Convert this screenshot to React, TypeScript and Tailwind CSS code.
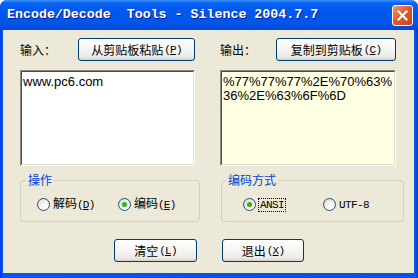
import React from "react";

const cjk = "font-['Noto_Sans_CJK_SC','Liberation_Sans',sans-serif]";

function XpButton({ label, keyChar, className }: { label: string; keyChar: string; className: string }) {
    return (
        <button
            className={`h-[23px] rounded-[3px] border border-[#003c74] bg-[linear-gradient(180deg,#ffffff_0%,#f7f7f4_40%,#ecebe6_85%,#d6d0c5_100%)] text-[12px] leading-[12px] text-black flex items-center justify-center ${cjk} ${className}`}
        >
            <span>{label}</span>
            <span className="font-['Liberation_Mono',monospace] text-[11px] tracking-[-0.8px] ml-[1px]">
                (<span className="underline">{keyChar}</span>)
            </span>
        </button>
    );
}

function Radio({ checked, children, width }: { checked?: boolean; children: React.ReactNode; width: string }) {
    return (
        <div className={`flex items-center ${width}`}>
            <span className="w-[13px] h-[13px] rounded-full border border-[#1c5180] bg-[radial-gradient(circle_at_65%_70%,#ffffff_0%,#f4f3ee_40%,#d9d6c8_100%)] flex items-center justify-center shrink-0">
                {checked && <span className="w-[5px] h-[5px] rounded-full bg-[#3fae2a] shadow-[0_0_1px_#7ad36a]" />}
            </span>
            <span className="ml-[3px] text-[12px] leading-[13px] text-black">{children}</span>
        </div>
    );
}

function Sunken({ className, children }: { className: string; children: React.ReactNode }) {
    return (
        <div className={`border border-t-[#8a8a86] border-l-[#8a8a86] border-b-[#ffffff] border-r-[#ffffff] ${className}`}>
            <div className="h-full border border-t-[#4a4a46] border-l-[#4a4a46] border-b-[#e2dfd2] border-r-[#e2dfd2] px-[1px] pt-[3px] font-['Liberation_Sans',sans-serif] text-[13px] leading-[14px] text-black">
                {children}
            </div>
        </div>
    );
}

export default function App() {
    return (
        <div className={`w-[418px] h-[278px] flex flex-col rounded-t-[7px] overflow-hidden bg-[linear-gradient(90deg,#0831d9_0px,#0058ee_2px,#0055e5_calc(100%-2px),#0033b8_100%)] ${cjk}`}>
            {/* title bar */}
            <div className="h-[30px] shrink-0 flex items-center justify-between pl-[7px] pr-[5px] bg-[linear-gradient(180deg,#3d95ff_0%,#0a64f2_10%,#0058ee_35%,#0056ea_75%,#0049d6_100%)]">
                <span className="whitespace-pre font-['Liberation_Mono',monospace] font-bold text-[13.3px] text-white [text-shadow:1px_1px_0_#0a1e8a]">
                    Encode/Decode  Tools - Silence 2004.7.7
                </span>
                <div className="w-[21px] h-[21px] rounded-[3px] border border-white bg-[linear-gradient(135deg,#f29a76_0%,#e45a2e_45%,#c8401c_100%)] flex items-center justify-center">
                    <svg width="13" height="13" viewBox="0 0 13 13">
                        <path d="M2.5 2.5 L10.5 10.5 M10.5 2.5 L2.5 10.5" stroke="#ffffff" strokeWidth="2" strokeLinecap="square" />
                    </svg>
                </div>
            </div>

            {/* body */}
            <div className="flex-1 ml-[3px] mr-[4px] mb-[5px] bg-[#ece9d8] flex flex-col pt-[8px]">
                <div className="flex pl-[17px] gap-[23px]">
                    {/* input column */}
                    <div className="w-[177px] flex flex-col">
                        <div className="h-[23px] flex items-center">
                            <span className="w-[58px] text-[12px] text-black">输入：</span>
                            <XpButton label="从剪贴板粘贴" keyChar="P" className="w-[117px]" />
                        </div>
                        <Sunken className="mt-[9px] w-[175px] h-[96px] bg-white">www.pc6.com</Sunken>
                        <fieldset className="mt-[8px] w-[177px] border border-[#d0d0bf] rounded-[4px] pl-[16px] pt-[10px] pb-[9px] flex">
                            <legend className="-ml-[11px] px-[2px] text-[12px] leading-[12px] text-[#0046d5]">操作</legend>
                            <div className="flex">
                                <Radio width="w-[81px]">
                                    解码<span className="font-['Liberation_Mono',monospace] text-[11px] tracking-[-0.8px]">(<span className="underline">D</span>)</span>
                                </Radio>
                                <Radio checked width="w-[81px]">
                                    编码<span className="font-['Liberation_Mono',monospace] text-[11px] tracking-[-0.8px]">(<span className="underline">E</span>)</span>
                                </Radio>
                            </div>
                        </fieldset>
                    </div>

                    {/* output column */}
                    <div className="w-[176px] flex flex-col">
                        <div className="h-[23px] flex items-center">
                            <span className="w-[56px] text-[12px] text-black">输出：</span>
                            <XpButton label="复制到剪贴板" keyChar="C" className="w-[120px]" />
                        </div>
                        <Sunken className="mt-[9px] w-[176px] h-[96px] bg-[#ffffe1]">
                            %77%77%77%2E%70%63%
                            <br />
                            36%2E%63%6F%6D
                        </Sunken>
                        <fieldset className="mt-[8px] ml-[1px] w-[175px] border border-[#d0d0bf] rounded-[4px] pl-[21px] pt-[10px] pb-[9px] flex">
                            <legend className="-ml-[17px] px-[2px] text-[12px] leading-[12px] text-[#0046d5]">编码方式</legend>
                            <div className="flex">
                                <Radio checked width="w-[80px]">
                                    <span className="font-['Liberation_Mono',monospace] text-[11px] tracking-[-0.6px] outline outline-1 outline-dotted outline-black px-[1px]">ANSI</span>
                                </Radio>
                                <Radio width="w-[80px]">
                                    <span className="font-['Liberation_Mono',monospace] text-[11px] tracking-[-0.6px]">UTF-8</span>
                                </Radio>
                            </div>
                        </fieldset>
                    </div>
                </div>

                <div className="mt-[17px] flex justify-center gap-[25px] pl-[1px]">
                    <XpButton label="清空" keyChar="L" className="w-[83px]" />
                    <XpButton label="退出" keyChar="X" className="w-[82px]" />
                </div>
            </div>
        </div>
    );
}
